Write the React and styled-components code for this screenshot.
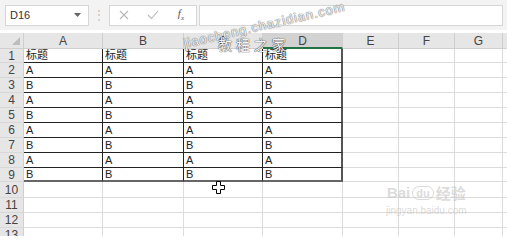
import React from "react";
import styled, { createGlobalStyle } from "styled-components";

const GlobalStyle = createGlobalStyle`
  html, body {
    margin: 0;
    padding: 0;
    background: #ffffff;
    overflow: hidden;
  }
  body {
    font-family: "Liberation Sans", "Noto Sans CJK SC", Arial, sans-serif;
  }
`;

const COLS = ["A", "B", "C", "D", "E", "F", "G"];
const COL_W = [79, 81, 79, 80, 56, 56, 48];
const ROW_H = [14, 15, 15, 15, 15, 15, 15, 15, 14, 16, 15, 15, 15];

const data = [
  ["标题", "标题", "标题", "标题"],
  ["A", "A", "A", "A"],
  ["B", "B", "B", "B"],
  ["A", "A", "A", "A"],
  ["B", "B", "B", "B"],
  ["A", "A", "A", "A"],
  ["B", "B", "B", "B"],
  ["A", "A", "A", "A"],
  ["B", "B", "B", "B"],
];

function App() {
  return (
    <Page>
      <GlobalStyle />
      <FormulaBar>
        <NameBox>
          <span>D16</span>
          <Caret>
            <svg width="7" height="4" viewBox="0 0 7 4">
              <path d="M0 0 L7 0 L3.5 4 Z" fill="#666" />
            </svg>
          </Caret>
        </NameBox>
        <Grip>⋮</Grip>
        <FxBox>
          <svg width="10" height="10" viewBox="0 0 10 10">
            <path d="M1 1 L9 9 M9 1 L1 9" stroke="#b8b8b8" strokeWidth="1.1" />
          </svg>
          <svg width="12" height="10" viewBox="0 0 12 10">
            <path d="M1 5 L4.5 8.5 L11 1" stroke="#b8b8b8" strokeWidth="1.1" fill="none" />
          </svg>
          <Fx>
            f<sub>x</sub>
          </Fx>
        </FxBox>
        <Input />
      </FormulaBar>

      <Sheet>
        <Grid>
          <Corner>
            <svg width="8" height="8" viewBox="0 0 8 8">
              <path d="M8 0 L8 8 L0 8 Z" fill="#bdbdbd" />
            </svg>
          </Corner>
          {COLS.map((c) => (
            <ColHead key={c} $active={c === "D"}>
              {c}
            </ColHead>
          ))}
          <ColHead $filler />
          {ROW_H.map((h, r) => (
            <React.Fragment key={r}>
              <RowHead>{r + 1}</RowHead>
              {COLS.map((c, ci) => {
                const inTable = r < 9 && ci < 4;
                return (
                  <Cell
                    key={c}
                    $table={inTable}
                    $lastCol={inTable && ci === 3}
                    $lastRow={inTable && r === 8}
                  >
                    {inTable ? data[r][ci] : ""}
                  </Cell>
                );
              })}
              <Cell $filler />
            </React.Fragment>
          ))}
        </Grid>

        <Cursor>
          <svg width="13" height="13" viewBox="0 0 13 13">
            <path
              d="M4.5 0.5 H8.5 V4.5 H12.5 V8.5 H8.5 V12.5 H4.5 V8.5 H0.5 V4.5 H4.5 Z"
              fill="#fff"
              stroke="#000"
              strokeWidth="1"
            />
          </svg>
        </Cursor>
      </Sheet>

      <SiteMark>jiaocheng.chazidian.com</SiteMark>
      <SiteMarkCn>教 程 之 家</SiteMarkCn>

      <BaiduMark>
        <BaiduLine>
          <span>Bai</span>
          <Paw>du</Paw>
          <span>经验</span>
        </BaiduLine>
        <BaiduSub>jingyan.baidu.com</BaiduSub>
      </BaiduMark>
    </Page>
  );
}

export default App;

const Page = styled.div`
  width: 507px;
  height: 245px;
  position: relative;
  overflow: hidden;
  background: #ffffff;
`;

const FormulaBar = styled.div`
  height: 30px;
  display: flex;
  align-items: center;
  padding: 0 4px 0 5px;
  box-sizing: border-box;
  background: #f3f3f3;
`;

const NameBox = styled.div`
  width: 84px;
  height: 21px;
  box-sizing: border-box;
  background: #fff;
  border: 1px solid #d6d6d6;
  display: flex;
  align-items: center;
  justify-content: space-between;
  padding: 0 7px 0 4px;
  font-size: 11px;
  color: #333;
`;

const Caret = styled.span`
  display: flex;
  align-items: center;
`;

const Grip = styled.div`
  width: 20px;
  text-align: center;
  color: #c4c4c4;
  font-size: 12px;
`;

const FxBox = styled.div`
  width: 88px;
  height: 21px;
  box-sizing: border-box;
  background: #fff;
  border: 1px solid #d6d6d6;
  display: flex;
  align-items: center;
  justify-content: space-between;
  padding: 0 12px 0 9px;
`;

const Fx = styled.span`
  font-family: "Liberation Serif", serif;
  font-style: italic;
  font-size: 11px;
  color: #555;
  sub {
    font-size: 7px;
  }
`;

const Input = styled.div`
  flex: 1;
  height: 21px;
  margin-left: 2px;
  box-sizing: border-box;
  background: #fff;
  border: 1px solid #d6d6d6;
`;

const Sheet = styled.div`
  position: relative;
  margin-top: 3px;
  height: 203px;
  overflow: hidden;
`;

const Grid = styled.div`
  display: grid;
  grid-template-columns: 24px ${COL_W.map((w) => w + "px").join(" ")} 1fr;
  grid-template-rows: 16px ${ROW_H.map((h) => h + "px").join(" ")};
`;

const Corner = styled.div`
  background: #e6e6e6;
  border-right: 1px solid #cfcfcf;
  border-bottom: 1px solid #cfcfcf;
  box-sizing: border-box;
  display: flex;
  align-items: flex-end;
  justify-content: flex-end;
  padding: 0 3px 3px 0;
`;

const ColHead = styled.div`
  background: ${(p) => (p.$active ? "#d2d2d2" : "#e6e6e6")};
  border-right: 1px solid ${(p) => (p.$filler ? "transparent" : "#cfcfcf")};
  border-bottom: ${(p) => (p.$active ? "2px solid #217346" : "1px solid #cfcfcf")};
  box-sizing: border-box;
  font-size: 12px;
  color: #444;
  display: flex;
  align-items: center;
  justify-content: center;
  padding-top: 1px;
`;

const RowHead = styled.div`
  background: #e6e6e6;
  border-right: 1px solid #cfcfcf;
  border-bottom: 1px solid #d8d8d8;
  box-sizing: border-box;
  font-size: 12px;
  color: #444;
  display: flex;
  align-items: center;
  justify-content: center;
`;

const Cell = styled.div`
  box-sizing: border-box;
  border-right: ${(p) =>
    p.$lastCol
      ? "2px solid #555"
      : p.$table
      ? "1px solid #222"
      : p.$filler
      ? "none"
      : "1px solid #dcdcdc"};
  border-bottom: ${(p) =>
    p.$lastRow ? "2px solid #666" : p.$table ? "1px solid #222" : "1px solid #dcdcdc"};
  font-size: 11px;
  color: #222;
  padding-left: 2px;
  display: flex;
  align-items: center;
  line-height: 1;
  white-space: nowrap;
  overflow: hidden;
`;

const Cursor = styled.div`
  position: absolute;
  left: 212px;
  top: 148px;
  display: flex;
`;

const SiteMark = styled.div`
  position: absolute;
  left: 184px;
  top: 36px;
  transform: rotate(-13deg);
  transform-origin: left center;
  font-size: 13px;
  letter-spacing: 1px;
  color: rgba(255, 255, 255, 0.9);
  text-shadow: 0 0 1px #666, 0 0 1px #666;
  white-space: nowrap;
`;

const SiteMarkCn = styled.div`
  position: absolute;
  left: 218px;
  top: 34px;
  font-size: 14px;
  color: rgba(255, 255, 255, 0.95);
  text-shadow: 0 0 1px #333, 0 0 1px #333;
  white-space: nowrap;
`;

const BaiduMark = styled.div`
  position: absolute;
  left: 386px;
  top: 182px;
  display: flex;
  flex-direction: column;
  align-items: center;
  color: rgba(190, 190, 190, 0.55);
`;

const BaiduLine = styled.div`
  display: flex;
  align-items: center;
  gap: 2px;
  font-size: 15px;
  font-weight: bold;
`;

const Paw = styled.span`
  border: 1px solid rgba(190, 190, 190, 0.55);
  border-radius: 10px;
  padding: 0 3px;
  font-size: 11px;
`;

const BaiduSub = styled.div`
  font-size: 10px;
  margin-top: 2px;
`;
